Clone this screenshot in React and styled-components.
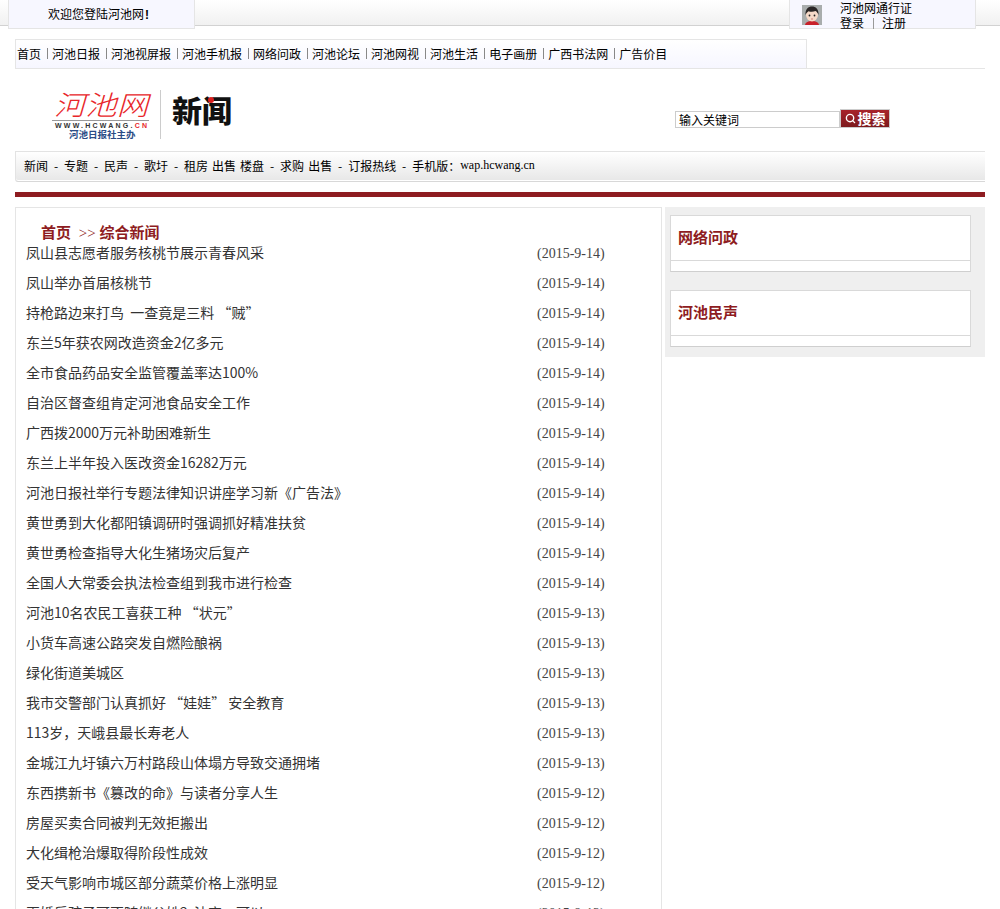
import React, { Fragment } from "react";
import styled, { createGlobalStyle } from "styled-components";
import { Search } from "lucide-react";

const CJK = `"Liberation Serif", "Noto Sans CJK SC", serif`;
const SANS = `"Noto Sans CJK SC", "Liberation Sans", sans-serif`;
const RED = "#8e1c21";

const GlobalStyle = createGlobalStyle`
  html, body {
    margin: 0;
    padding: 0;
    height: 909px;
    overflow: hidden;
    background: #fff;
    font-family: ${SANS};
    font-size: 12px;
    color: #000;
  }
`;

const TopBar = styled.div`
  height: 25px;
  display: flex;
  justify-content: space-between;
  padding: 0 24px 0 8px;
  background: linear-gradient(#fff, #f1f1f1);
  border-bottom: 1px solid #d2d2d2;
`;
const TopBox = styled.div`
  box-sizing: border-box;
  width: 187px;
  height: 29px;
  background: #f7f7ff;
  border: 1px solid #e5e5e5;
  border-top: 0;
`;
const Welcome = styled(TopBox)`
  padding-left: 39px;
  line-height: 27px;
  white-space: nowrap;
  b {
    font-family: "Liberation Sans", sans-serif;
    margin-left: 1px;
  }
`;
const UserBox = styled(TopBox)`
  display: flex;
  padding-left: 12px;
`;
const Avatar = styled.svg`
  width: 20px;
  height: 20px;
  margin-top: 5px;
  margin-right: 18px;
  flex: none;
`;
const UserText = styled.div`
  line-height: 15px;
  white-space: nowrap;
`;
const UserSep = styled.span`
  display: inline-block;
  width: 1px;
  height: 11px;
  margin: 0 8px 0 9px;
  vertical-align: -1px;
  background: #999;
`;

const Wrap = styled.div`
  width: 970px;
  margin-left: 15px;
`;
const NavLine = styled.div`
  margin-top: 13px;
  border-bottom: 1px solid #e5e5e5;
`;
const Nav = styled.nav`
  box-sizing: border-box;
  width: 792px;
  height: 29px;
  display: flex;
  align-items: center;
  padding: 0 0 2px 1px;
  border: 1px solid #e5e5e5;
  border-bottom: 0;
  background: linear-gradient(#fff, #f6f6ff);
  font-size: 12px;
  white-space: nowrap;
`;
const NavSep = styled.span`
  width: 1px;
  height: 11px;
  margin: 0 4px 0 6px;
  background: #888;
`;

const Masthead = styled.div`
  height: 82px;
  display: flex;
  justify-content: space-between;
  padding: 21px 95px 0 37px;
  box-sizing: border-box;
`;
const LogoBlock = styled.div`
  display: flex;
  align-items: flex-start;
`;
const Logo = styled.svg`
  width: 100px;
  height: 50px;
  display: block;
  overflow: visible;
`;
const LogoDivider = styled.div`
  width: 1px;
  height: 49px;
  margin: 0 0 0 8px;
  background: #ccc;
`;
const Channel = styled.div`
  position: relative;
  margin: 2px 0 0 11px;
  font-family: ${CJK};
  font-size: 30px;
  line-height: 40px;
  font-weight: 900;
  color: #111;
`;
const ChannelDot = styled.i`
  position: absolute;
  left: 36px;
  top: 5px;
  width: 6px;
  height: 6px;
  border-radius: 50%;
  background: #d9201f;
`;
const SearchForm = styled.div`
  display: flex;
  align-items: flex-end;
  margin-top: 19px;
  height: 19px;
`;
const SearchInput = styled.div`
  box-sizing: border-box;
  width: 165px;
  height: 17px;
  padding-left: 3px;
  border: 1px solid #ccc;
  line-height: 16px;
  font-size: 12px;
`;
const SearchButton = styled.div`
  box-sizing: border-box;
  width: 50px;
  height: 19px;
  display: flex;
  align-items: center;
  justify-content: center;
  gap: 2px;
  border: 1px solid #ccc;
  background: linear-gradient(#a8232a, #7c1a1e);
  color: #fff;
  font-size: 14px;
  font-weight: 700;
  line-height: 17px;
`;

const SubNav = styled.div`
  box-sizing: border-box;
  height: 31px;
  display: flex;
  align-items: center;
  padding: 0 0 2px 8px;
  border-top: 1px solid #e3e3e3;
  border-left: 1px solid #e3e3e3;
  border-bottom: 1px solid #d8d8d8;
  border-bottom-left-radius: 3px;
  box-shadow: inset 0 -1px 0 #fff;
  background: linear-gradient(#fff, #e7e7e7);
  white-space: nowrap;
`;
const SubDash = styled.span`
  width: 16px;
  text-align: center;
`;
const SubLink = styled.span`
  margin-right: ${(p) => p.$gap || 0}px;
`;
const Wap = styled.span`
  font-family: "Liberation Serif", serif;
  font-size: 12px;
`;
const RedRule = styled.div`
  height: 5px;
  margin-top: 10px;
  background: ${RED};
`;

const Columns = styled.div`
  display: flex;
  align-items: flex-start;
  gap: 3px;
  margin-top: 10px;
`;
const ListPanel = styled.div`
  box-sizing: border-box;
  width: 647px;
  height: 702px;
  padding: 16px 0 0 10px;
  border: 1px solid #e5e5e5;
  border-bottom: 0;
  overflow: hidden;
`;
const Crumb = styled.div`
  padding-left: 15px;
  height: 19px;
  font-family: ${CJK};
  font-size: 15px;
  line-height: 19px;
  font-weight: 700;
  color: ${RED};
`;
const Arrows = styled.span`
  font-weight: 400;
  margin-left: 4px;
`;
const NewsList = styled.ul`
  list-style: none;
  margin: 0;
  padding: 0;
`;
const NewsRow = styled.li`
  height: 30px;
  margin-top: ${(p) => (p.$first ? "-6px" : "0")};
  display: flex;
  align-items: center;
  font-size: 14px;
  line-height: 30px;
  color: #333;
`;
const NewsTitle = styled.span`
  width: 511px;
  flex: none;
  white-space: pre;
`;
const NewsDate = styled.span`
  margin-top: 4px;
  font-family: "Liberation Serif", serif;
  font-size: 14px;
  color: #444;
`;

const Sidebar = styled.aside`
  box-sizing: border-box;
  width: 320px;
  height: 150px;
  padding: 8px 14px 0 5px;
  background: #efefef;
`;
const Card = styled.section`
  box-sizing: border-box;
  height: 57px;
  margin-bottom: 18px;
  border: 1px solid #d9d9d9;
  border-bottom-color: #cfcfcf;
  background: #fff;
`;
const CardHead = styled.h3`
  box-sizing: border-box;
  height: 45px;
  margin: 0;
  padding-left: 7px;
  border-bottom: 1px solid #d9d9d9;
  font-family: ${CJK};
  font-size: 15px;
  line-height: 45px;
  font-weight: 700;
  color: ${RED};
`;

const navItems = ["首页", "河池日报", "河池视屏报", "河池手机报", "网络问政", "河池论坛", "河池网视", "河池生活", "电子画册", "广西书法网", "广告价目"];

const news = [
  ["凤山县志愿者服务核桃节展示青春风采", "2015-9-14"],
  ["凤山举办首届核桃节", "2015-9-14"],
  ["持枪路边来打鸟  一查竟是三料 “贼”", "2015-9-14"],
  ["东兰5年获农网改造资金2亿多元", "2015-9-14"],
  ["全市食品药品安全监管覆盖率达100%", "2015-9-14"],
  ["自治区督查组肯定河池食品安全工作", "2015-9-14"],
  ["广西拨2000万元补助困难新生", "2015-9-14"],
  ["东兰上半年投入医改资金16282万元", "2015-9-14"],
  ["河池日报社举行专题法律知识讲座学习新《广告法》", "2015-9-14"],
  ["黄世勇到大化都阳镇调研时强调抓好精准扶贫", "2015-9-14"],
  ["黄世勇检查指导大化生猪场灾后复产", "2015-9-14"],
  ["全国人大常委会执法检查组到我市进行检查", "2015-9-14"],
  ["河池10名农民工喜获工种 “状元”", "2015-9-13"],
  ["小货车高速公路突发自燃险酿祸", "2015-9-13"],
  ["绿化街道美城区", "2015-9-13"],
  ["我市交警部门认真抓好 “娃娃” 安全教育", "2015-9-13"],
  ["113岁，天峨县最长寿老人", "2015-9-13"],
  ["金城江九圩镇六万村路段山体塌方导致交通拥堵", "2015-9-13"],
  ["东西携新书《篡改的命》与读者分享人生", "2015-9-12"],
  ["房屋买卖合同被判无效拒搬出", "2015-9-12"],
  ["大化缉枪治爆取得阶段性成效", "2015-9-12"],
  ["受天气影响市城区部分蔬菜价格上涨明显", "2015-9-12"],
  ["再婚后孩子可不随继父姓？法官：可以", "2015-9-12"],
];

function AvatarIcon() {
  return (
    <Avatar viewBox="0 0 20 20">
      <rect width="20" height="20" fill="#a9adad" />
      <path d="M3 20c.5-3 3.500-4 7-4s6.500 1 7 4z" fill="#c8202a" />
      <ellipse cx="10" cy="10" rx="6" ry="6.500" fill="#f6d9c8" />
      <path d="M3.500 10C3 4 6.500 1.500 10 1.500S17 4 16.500 10c-.8-2-1.800-3.500-3-4-2 1-5 1-7 .2-1.200.8-2.200 2-3 3.800z" fill="#2a2626" />
      <circle cx="7.500" cy="10.500" r=".9" fill="#222" />
      <circle cx="12.500" cy="10.500" r=".9" fill="#222" />
      <path d="M9 14h2" stroke="#c0605a" strokeWidth=".7" />
    </Avatar>
  );
}

function LogoMark() {
  return (
    <Logo viewBox="0 0 100 50">
      <text x="2" y="25" fontFamily={SANS} fontSize="27" fontWeight="300" fontStyle="italic" fill="#e8262a" textLength="94" lengthAdjust="spacingAndGlyphs">河池网</text>
      <rect x="0" y="30" width="97" height="1" fill="#999" />
      <text x="3" y="38" fontFamily={`"Liberation Sans", sans-serif`} fontSize="7" fontWeight="700" fill="#333" textLength="92">
        WWW.HCWANG.<tspan fill="#e8262a">CN</tspan>
      </text>
      <text x="17" y="48" fontFamily={CJK} fontSize="9.500" fontWeight="700" fill="#2b4c86">河池日报社主办</text>
    </Logo>
  );
}

export default function App() {
  return (
    <>
      <GlobalStyle />
      <TopBar>
        <Welcome>欢迎您登陆河池网<b>!</b></Welcome>
        <UserBox>
          <AvatarIcon />
          <UserText>
            <div>河池网通行证</div>
            <div>登录<UserSep />注册</div>
          </UserText>
        </UserBox>
      </TopBar>
      <Wrap>
        <NavLine>
          <Nav>
            {navItems.map((item, i) => (
              <Fragment key={item}>
                {i > 0 && <NavSep />}
                <span>{item}</span>
              </Fragment>
            ))}
          </Nav>
        </NavLine>
        <Masthead>
          <LogoBlock>
            <LogoMark />
            <LogoDivider />
            <Channel>新闻<ChannelDot /></Channel>
          </LogoBlock>
          <SearchForm>
            <SearchInput>输入关键词</SearchInput>
            <SearchButton>
              <Search size={11} strokeWidth={3} />
              搜索
            </SearchButton>
          </SearchForm>
        </Masthead>
        <SubNav>
          <span>新闻</span><SubDash>-</SubDash>
          <span>专题</span><SubDash>-</SubDash>
          <span>民声</span><SubDash>-</SubDash>
          <span>歌圩</span><SubDash>-</SubDash>
          <SubLink $gap={4}>租房</SubLink><SubLink $gap={4}>出售</SubLink><span>楼盘</span><SubDash>-</SubDash>
          <SubLink $gap={4}>求购</SubLink><span>出售</span><SubDash>-</SubDash>
          <span>订报热线</span><SubDash>-</SubDash>
          <span>手机版：</span><Wap>wap.hcwang.cn</Wap>
        </SubNav>
        <RedRule />
        <Columns>
          <ListPanel>
            <Crumb>首页<Arrows> &gt;&gt; </Arrows>综合新闻</Crumb>
            <NewsList>
              {news.map(([title, date], i) => (
                <NewsRow key={title} $first={i === 0}>
                  <NewsTitle>{title}</NewsTitle>
                  <NewsDate>({date})</NewsDate>
                </NewsRow>
              ))}
            </NewsList>
          </ListPanel>
          <Sidebar>
            <Card><CardHead>网络问政</CardHead></Card>
            <Card><CardHead>河池民声</CardHead></Card>
          </Sidebar>
        </Columns>
      </Wrap>
    </>
  );
}
